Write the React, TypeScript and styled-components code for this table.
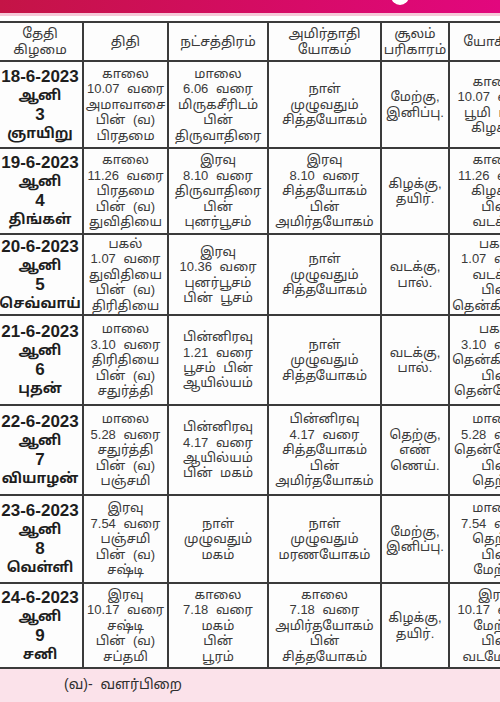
import React from "react";
import styled, { createGlobalStyle } from "styled-components";

const FONT =
  '"Liberation Sans", "Noto Sans Tamil", "Lohit Tamil", "Noto Sans", Arial, sans-serif';

const COLUMNS = "84px 83px 98px 111px 66px 92px";
const ROW_HEIGHTS = [37, 85, 84, 79, 88, 88, 86, 83];

const GlobalStyle = createGlobalStyle`
  html, body {
    margin: 0;
    padding: 0;
    background: #ffffff;
    overflow: hidden;
  }
  body {
    width: 500px;
    height: 702px;
    font-family: ${FONT};
  }
`;

const Page = styled.div`
  width: 500px;
  height: 702px;
  display: flex;
  flex-direction: column;
  overflow: hidden;
  background: #ffffff;
`;

const Banner = styled.div`
  position: relative;
  height: 13px;
  flex-shrink: 0;
  background: linear-gradient(90deg, #c41446 0%, #d40c62 50%, #e2077e 100%);
`;

const BannerBump = styled.div`
  position: absolute;
  left: 391px;
  top: -12px;
  width: 18px;
  height: 17px;
  border-radius: 0 0 9px 9px;
  background: #ffffff;
`;

const BannerShadow = styled.div`
  height: 3px;
  flex-shrink: 0;
  background: #f6c9d8;
`;

const Spacer = styled.div`
  height: 5px;
  flex-shrink: 0;
`;

const Table = styled.div`
  display: grid;
  grid-template-columns: ${COLUMNS};
  grid-template-rows: ${ROW_HEIGHTS.map((h) => h + "px").join(" ")};
  gap: 2px;
  padding: 2px;
  background: #3b3b3b;
  margin-left: -4px;
  width: max-content;
  flex-shrink: 0;
`;

const Cell = styled.div<{ $head?: boolean; $date?: boolean }>`
  background: #fdfdfd;
  display: flex;
  flex-direction: column;
  align-items: center;
  justify-content: center;
  text-align: center;
  white-space: nowrap;
  overflow: hidden;
  color: ${(p) => (p.$date ? "#1e1e1e" : "#3a3a3a")};
  font-size: ${(p) => (p.$date ? "17px" : p.$head ? "13.5px" : "13px")};
  font-weight: ${(p) => (p.$date ? 700 : 400)};
  line-height: ${(p) => (p.$date ? "19px" : p.$head ? "16px" : "15.4px")};
  word-spacing: ${(p) => (p.$date ? "0" : "4px")};
`;

const Line = styled.span<{ $tamil?: boolean }>`
  display: block;
  font-size: ${(p) => (p.$tamil ? "14px" : "inherit")};
`;

const Footer = styled.div`
  flex: 1;
  background: #fbe2ea;
  display: flex;
  align-items: center;
  padding-left: 64px;
  padding-bottom: 2px;
  color: #2e2e2e;
  font-size: 14px;
  word-spacing: 4px;
`;

type Row = string[][];

const HEADER: string[][] = [
  ["தேதி", "கிழமை"],
  ["திதி"],
  ["நட்சத்திரம்"],
  ["அமிர்தாதி", "யோகம்"],
  ["சூலம்", "பரிகாரம்"],
  ["யோகினி"],
];

const ROWS: Row[] = [
  [
    ["18-6-2023", "ஆனி", "3", "ஞாயிறு"],
    ["காலை", "10.07 வரை", "அமாவாசை", "பின் (வ)", "பிரதமை"],
    ["மாலை", "6.06 வரை", "மிருகசீரிடம்", "பின்", "திருவாதிரை"],
    ["நாள்", "முழுவதும்", "சித்தயோகம்"],
    ["மேற்கு,", "இனிப்பு."],
    ["காலை", "10.07 வரை", "பூமி பின்", "கிழக்கு"],
  ],
  [
    ["19-6-2023", "ஆனி", "4", "திங்கள்"],
    ["காலை", "11.26 வரை", "பிரதமை", "பின் (வ)", "துவிதியை"],
    ["இரவு", "8.10 வரை", "திருவாதிரை", "பின்", "புனர்பூசம்"],
    ["இரவு", "8.10 வரை", "சித்தயோகம்", "பின்", "அமிர்தயோகம்"],
    ["கிழக்கு,", "தயிர்."],
    ["காலை", "11.26 வரை", "கிழக்கு", "பின்", "வடக்கு"],
  ],
  [
    ["20-6-2023", "ஆனி", "5", "செவ்வாய்"],
    ["பகல்", "1.07 வரை", "துவிதியை", "பின் (வ)", "திரிதியை"],
    ["இரவு", "10.36 வரை", "புனர்பூசம்", "பின் பூசம்"],
    ["நாள்", "முழுவதும்", "சித்தயோகம்"],
    ["வடக்கு,", "பால்."],
    ["பகல்", "1.07 வரை", "வடக்கு", "பின்", "தென்கிழக்கு"],
  ],
  [
    ["21-6-2023", "ஆனி", "6", "புதன்"],
    ["மாலை", "3.10 வரை", "திரிதியை", "பின் (வ)", "சதுர்த்தி"],
    ["பின்னிரவு", "1.21 வரை", "பூசம் பின்", "ஆயில்யம்"],
    ["நாள்", "முழுவதும்", "சித்தயோகம்"],
    ["வடக்கு,", "பால்."],
    ["பகல்", "3.10 வரை", "தென்கிழக்கு", "பின்", "தென்மேற்கு"],
  ],
  [
    ["22-6-2023", "ஆனி", "7", "வியாழன்"],
    ["மாலை", "5.28 வரை", "சதுர்த்தி", "பின் (வ)", "பஞ்சமி"],
    ["பின்னிரவு", "4.17 வரை", "ஆயில்யம்", "பின் மகம்"],
    ["பின்னிரவு", "4.17 வரை", "சித்தயோகம்", "பின்", "அமிர்தயோகம்"],
    ["தெற்கு,", "எண்", "ணெய்."],
    ["மாலை", "5.28 வரை", "தென்மேற்கு", "பின்", "தெற்கு"],
  ],
  [
    ["23-6-2023", "ஆனி", "8", "வெள்ளி"],
    ["இரவு", "7.54 வரை", "பஞ்சமி", "பின் (வ)", "சஷ்டி"],
    ["நாள்", "முழுவதும்", "மகம்"],
    ["நாள்", "முழுவதும்", "மரணயோகம்"],
    ["மேற்கு,", "இனிப்பு."],
    ["மாலை", "7.54 வரை", "தெற்கு", "பின்", "மேற்கு"],
  ],
  [
    ["24-6-2023", "ஆனி", "9", "சனி"],
    ["இரவு", "10.17 வரை", "சஷ்டி", "பின் (வ)", "சப்தமி"],
    ["காலை", "7.18 வரை", "மகம்", "பின்", "பூரம்"],
    ["காலை", "7.18 வரை", "அமிர்தயோகம்", "பின்", "சித்தயோகம்"],
    ["கிழக்கு,", "தயிர்."],
    ["இரவு", "10.17 வரை", "மேற்கு", "பின்", "வடமேற்கு"],
  ],
];

function Lines({ lines, date }: { lines: string[]; date?: boolean }) {
  return (
    <>
      {lines.map((l, i) => (
        <Line key={i} $tamil={date && i % 2 === 1}>
          {l}
        </Line>
      ))}
    </>
  );
}

export default function App() {
  return (
    <Page>
      <GlobalStyle />
      <Banner>
        <BannerBump />
      </Banner>
      <BannerShadow />
      <Spacer />
      <Table>
        {HEADER.map((h, i) => (
          <Cell $head key={"h" + i}>
            <Lines lines={h} />
          </Cell>
        ))}
        {ROWS.map((row, r) =>
          row.map((cell, c) => (
            <Cell $date={c === 0} key={r + "-" + c}>
              <Lines lines={cell} date={c === 0} />
            </Cell>
          ))
        )}
      </Table>
      <Footer>(வ)- வளர்பிறை</Footer>
    </Page>
  );
}
